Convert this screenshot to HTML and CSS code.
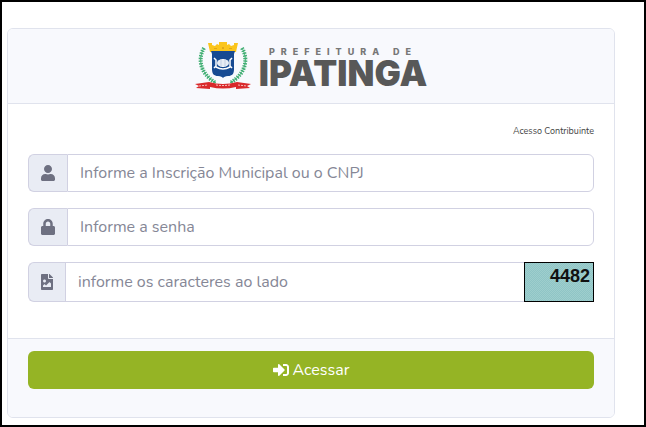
FILE: index.html
```
<!DOCTYPE html>
<html lang="pt-BR">
<head>
    <meta charset="UTF-8">
    <meta name="viewport" content="width=device-width, initial-scale=1.0">
    <title>Prefeitura de Ipatinga - Acesso Contribuinte</title>
    <link rel="stylesheet" href="styles.css">
</head>
<body>
    <form class="card">
        <div class="card-header">
            <svg class="crest" viewBox="0 0 56 50" aria-hidden="true">
                <!-- louros -->
                <g fill="none" stroke="#3fae72" stroke-width="1">
                    <path d="M9 7C3 17 4 32 21 42"/>
                    <path d="M47 7C53 17 52 32 35 42"/>
                </g>
                <g fill="none" stroke="#3fae72" stroke-width="4" stroke-dasharray="1.4 1.2">
                    <path d="M9 7C3 17 4 32 21 42"/>
                    <path d="M47 7C53 17 52 32 35 42"/>
                </g>
                <!-- coroa -->
                <path fill="#fbc51c" d="M13 2h4v2l3 1 2-2 2 1V1h8v3l2-1 2 2 3-1V2h4l-2 9H15z"/>
                <path fill="#e0a81a" d="M19 7h3v1h-3zM27 6h2v2h-2zM34 7h3v1h-3z"/>
                <!-- escudo -->
                <path fill="#174a92" d="M16 10h24l-1 3v15c0 5-2 7-6 7-3 0-4 1-5 2-1-1-2-2-5-2-4 0-6-2-6-7V13z"/>
                <ellipse cx="28" cy="22" rx="6" ry="4" fill="#fff"/>
                <path fill="none" stroke="#fff" stroke-width="1.500" d="M19 17l2 2v6l-2 2M37 17l-2 2v6l2 2M21 26q7 4 14 0"/>
                <path fill="none" stroke="#9fb2d1" stroke-width=".5" d="M22 22h12M23 20h10M23 24h10M26 18v8M30 18v8"/>
                <!-- faixa -->
                <path fill="#d9292b" d="M0 43l14-2q14 4 28 0l14 2-4 2 3 2-14 1v-2q-13 3-26 0v2L1 47l3-2z"/>
                <path fill="none" stroke="#f5bcbb" stroke-width="1" stroke-dasharray="2 1" d="M4 45l9-1M21 44q7 1 14 0M43 44l9 1"/>
            </svg>
            <div class="brand">
                <span class="brand-top">PREFEITURA DE</span>
                <span class="brand-name">IPATINGA</span>
            </div>
        </div>

        <div class="card-body">
            <p class="access">Acesso Contribuinte</p>

            <div class="input-group">
                <label class="addon" for="inscricao" aria-label="Inscrição">
                    <svg class="icon" viewBox="0 0 448 512"><path d="M224 256c70.700 0 128-57.300 128-128S294.700 0 224 0 96 57.300 96 128s57.300 128 128 128zm89.600 32h-16.700c-22.200 10.200-46.900 16-72.900 16s-50.600-5.800-72.900-16h-16.700C60.200 288 0 348.200 0 422.400V464c0 26.500 21.500 48 48 48h352c26.500 0 48-21.500 48-48v-41.600c0-74.200-60.200-134.400-134.400-134.400z"/></svg>
                </label>
                <input type="text" id="inscricao" placeholder="Informe a Inscrição Municipal ou o CNPJ">
            </div>

            <div class="input-group">
                <label class="addon" for="senha" aria-label="Senha">
                    <svg class="icon" viewBox="0 0 448 512"><path d="M400 224h-24v-72C376 68.200 307.800 0 224 0S72 68.200 72 152v72H48c-26.500 0-48 21.500-48 48v192c0 26.500 21.500 48 48 48h352c26.500 0 48-21.500 48-48V272c0-26.500-21.500-48-48-48zm-104 0H152v-72c0-39.700 32.300-72 72-72s72 32.300 72 72v72z"/></svg>
                </label>
                <input type="password" id="senha" placeholder="Informe a senha">
            </div>

            <div class="input-group captcha-group">
                <label class="addon" for="captcha" aria-label="Caracteres">
                    <svg class="icon icon-file" viewBox="0 0 384 512"><path d="M384 121.900V128H256V0h6.100c6.400 0 12.500 2.500 17 7l97.900 98c4.500 4.500 7 10.600 7 16.900zM248 160c-13.200 0-24-10.800-24-24V0H24C10.700 0 0 10.700 0 24v464c0 13.300 10.700 24 24 24h336c13.300 0 24-10.700 24-24V160H248zm-135.500 16c26.500 0 48 21.500 48 48s-21.500 48-48 48-48-21.500-48-48 21.500-48 48-48zm208 240h-256l.5-48.500L104.500 328c4.700-4.700 11.800-4.200 16.500.5L160.500 368 264 264.500c4.700-4.700 12.300-4.700 17 0l39.500 39.500v112z"/></svg>
                </label>
                <input type="text" id="captcha" placeholder="informe os caracteres ao lado">
                <div class="captcha">4482</div>
            </div>
        </div>

        <div class="card-footer">
            <button type="submit" class="btn">
                <svg class="icon-login" viewBox="0 0 512 512" aria-hidden="true"><path d="M416 448h-84c-6.600 0-12-5.400-12-12v-40c0-6.600 5.400-12 12-12h84c17.700 0 32-14.300 32-32V160c0-17.700-14.300-32-32-32h-84c-6.600 0-12-5.400-12-12V76c0-6.600 5.400-12 12-12h84c53 0 96 43 96 96v192c0 53-43 96-96 96zm-47-209L201 71c-15-15-41-4.500-41 17v96H24c-13.300 0-24 10.700-24 24v96c0 13.300 10.700 24 24 24h136v96c0 21.500 26 32 41 17l168-168c9.300-9.400 9.300-24.600 0-34z"/></svg>
                Acessar
            </button>
        </div>
    </form>
</body>
</html>
```
FILE: styles.css
```
* {
    box-sizing: border-box;
}
body {
    font-family: Nunito, Lato, sans-serif;
    font-size: 16px;
    line-height: 24px;
    margin: 0;
    min-height: 100vh;
    padding: 26px 29px 7px 5px;
    border: 2px solid #000;
    background: #fff;
    color: #444;
}
.card {
    border: 1px solid #e0e3ed;
    border-radius: 6px;
    overflow: hidden;
}
.card-header {
    display: flex;
    justify-content: center;
    align-items: center;
    gap: 8px;
    padding: 12px 20px;
    background: #f8f9fd;
    border-bottom: 1px solid #e0e3ed;
}
.crest {
    width: 56px;
    height: 50px;
}
.brand {
    display: flex;
    flex-direction: column;
    align-items: center;
    padding-top: 4px;
    font-family: Inter, sans-serif;
    font-weight: 900;
    color: #585858;
}
.brand-top {
    font-size: 9px;
    font-weight: 800;
    line-height: 10px;
    letter-spacing: 6px;
    color: #777;
}
.brand-name {
    font-size: 35px;
    line-height: 32px;
}
.card-body {
    display: flex;
    flex-direction: column;
    gap: 16px;
    padding: 20px 20px 36px;
}
.access {
    margin: 0;
    font-size: 9px;
    line-height: 14px;
    text-align: right;
}
.input-group {
    display: flex;
    height: 38px;
}
.addon {
    display: flex;
    align-items: center;
    padding: 0 12px;
    background: #e9ecf4;
    border: 1px solid #d1d1e2;
    border-right: 0;
    border-radius: 6px 0 0 6px;
}
.icon {
    width: 14px;
    height: 16px;
    fill: #6e7081;
}
.icon-file {
    width: 12px;
}
.input-group input {
    flex: 1;
    min-width: 0;
    padding: 0 12px;
    font: inherit;
    color: #444;
    background: #fff;
    border: 1px solid #d1d1e2;
    border-radius: 0 6px 6px 0;
    outline: none;
}
.input-group input::placeholder {
    color: #858796;
    opacity: 1;
}
.captcha-group {
    height: 40px;
}
.captcha-group input {
    border-right: 0;
    border-radius: 0;
}
.captcha {
    width: 70px;
    padding: 1px 3px;
    border: 1px solid #000;
    background: repeating-conic-gradient(#8fc5c6 0 25%, #9fcecd 0 50%) 0 0 / 2px 2px;
    color: #111;
    font-family: "Liberation Sans", Arial, sans-serif;
    font-size: 18px;
    font-weight: bold;
    text-align: right;
}
.card-footer {
    padding: 12px 20px 28px;
    background: #f8f9fd;
    border-top: 1px solid #e0e3ed;
}
.btn {
    display: flex;
    justify-content: center;
    align-items: center;
    gap: 4px;
    width: 100%;
    height: 38px;
    border: 0;
    border-radius: 6px;
    background: #95b425;
    color: #fff;
    font: inherit;
    cursor: pointer;
}
.icon-login {
    width: 16px;
    height: 16px;
    fill: #fff;
}
```
